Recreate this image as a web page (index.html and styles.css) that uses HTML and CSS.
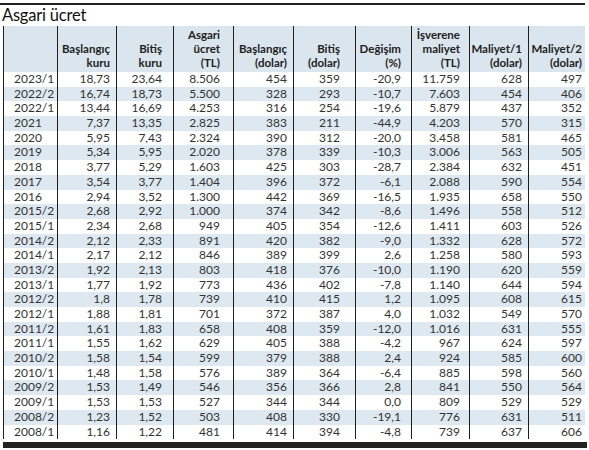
FILE: index.html
```html
<!DOCTYPE html>
<html lang="tr">
<head>
<meta charset="utf-8">
<title>Asgari ücret</title>
<link rel="stylesheet" href="styles.css">
</head>
<body>
<div class="chart">
  <div class="rule"></div>
  <h1 class="title">Asgari ücret</h1>
  <div class="table">
    <div class="row head">
      <div class="c"></div>
      <div class="c">Başlangıç<br>kuru</div>
      <div class="c">Bitiş<br>kuru</div>
      <div class="c">Asgari<br>ücret<br>(TL)</div>
      <div class="c">Başlangıç<br>(dolar)</div>
      <div class="c">Bitiş<br>(dolar)</div>
      <div class="c">Değişim<br>(%)</div>
      <div class="c">İşverene<br>maliyet<br>(TL)</div>
      <div class="c">Maliyet/1<br>(dolar)</div>
      <div class="c">Maliyet/2<br>(dolar)</div>
    </div>
    <div class="row"><div class="c">2023/1</div><div class="c">18,73</div><div class="c">23,64</div><div class="c">8.506</div><div class="c">454</div><div class="c">359</div><div class="c">-20,9</div><div class="c">11.759</div><div class="c">628</div><div class="c">497</div></div>
    <div class="row"><div class="c">2022/2</div><div class="c">16,74</div><div class="c">18,73</div><div class="c">5.500</div><div class="c">328</div><div class="c">293</div><div class="c">-10,7</div><div class="c">7.603</div><div class="c">454</div><div class="c">406</div></div>
    <div class="row"><div class="c">2022/1</div><div class="c">13,44</div><div class="c">16,69</div><div class="c">4.253</div><div class="c">316</div><div class="c">254</div><div class="c">-19,6</div><div class="c">5.879</div><div class="c">437</div><div class="c">352</div></div>
    <div class="row"><div class="c">2021</div><div class="c">7,37</div><div class="c">13,35</div><div class="c">2.825</div><div class="c">383</div><div class="c">211</div><div class="c">-44,9</div><div class="c">4.203</div><div class="c">570</div><div class="c">315</div></div>
    <div class="row"><div class="c">2020</div><div class="c">5,95</div><div class="c">7,43</div><div class="c">2.324</div><div class="c">390</div><div class="c">312</div><div class="c">-20,0</div><div class="c">3.458</div><div class="c">581</div><div class="c">465</div></div>
    <div class="row"><div class="c">2019</div><div class="c">5,34</div><div class="c">5,95</div><div class="c">2.020</div><div class="c">378</div><div class="c">339</div><div class="c">-10,3</div><div class="c">3.006</div><div class="c">563</div><div class="c">505</div></div>
    <div class="row"><div class="c">2018</div><div class="c">3,77</div><div class="c">5,29</div><div class="c">1.603</div><div class="c">425</div><div class="c">303</div><div class="c">-28,7</div><div class="c">2.384</div><div class="c">632</div><div class="c">451</div></div>
    <div class="row"><div class="c">2017</div><div class="c">3,54</div><div class="c">3,77</div><div class="c">1.404</div><div class="c">396</div><div class="c">372</div><div class="c">-6,1</div><div class="c">2.088</div><div class="c">590</div><div class="c">554</div></div>
    <div class="row"><div class="c">2016</div><div class="c">2,94</div><div class="c">3,52</div><div class="c">1.300</div><div class="c">442</div><div class="c">369</div><div class="c">-16,5</div><div class="c">1.935</div><div class="c">658</div><div class="c">550</div></div>
    <div class="row"><div class="c">2015/2</div><div class="c">2,68</div><div class="c">2,92</div><div class="c">1.000</div><div class="c">374</div><div class="c">342</div><div class="c">-8,6</div><div class="c">1.496</div><div class="c">558</div><div class="c">512</div></div>
    <div class="row"><div class="c">2015/1</div><div class="c">2,34</div><div class="c">2,68</div><div class="c">949</div><div class="c">405</div><div class="c">354</div><div class="c">-12,6</div><div class="c">1.411</div><div class="c">603</div><div class="c">526</div></div>
    <div class="row"><div class="c">2014/2</div><div class="c">2,12</div><div class="c">2,33</div><div class="c">891</div><div class="c">420</div><div class="c">382</div><div class="c">-9,0</div><div class="c">1.332</div><div class="c">628</div><div class="c">572</div></div>
    <div class="row"><div class="c">2014/1</div><div class="c">2,17</div><div class="c">2,12</div><div class="c">846</div><div class="c">389</div><div class="c">399</div><div class="c">2,6</div><div class="c">1.258</div><div class="c">580</div><div class="c">593</div></div>
    <div class="row"><div class="c">2013/2</div><div class="c">1,92</div><div class="c">2,13</div><div class="c">803</div><div class="c">418</div><div class="c">376</div><div class="c">-10,0</div><div class="c">1.190</div><div class="c">620</div><div class="c">559</div></div>
    <div class="row"><div class="c">2013/1</div><div class="c">1,77</div><div class="c">1,92</div><div class="c">773</div><div class="c">436</div><div class="c">402</div><div class="c">-7,8</div><div class="c">1.140</div><div class="c">644</div><div class="c">594</div></div>
    <div class="row"><div class="c">2012/2</div><div class="c">1,8</div><div class="c">1,78</div><div class="c">739</div><div class="c">410</div><div class="c">415</div><div class="c">1,2</div><div class="c">1.095</div><div class="c">608</div><div class="c">615</div></div>
    <div class="row"><div class="c">2012/1</div><div class="c">1,88</div><div class="c">1,81</div><div class="c">701</div><div class="c">372</div><div class="c">387</div><div class="c">4,0</div><div class="c">1.032</div><div class="c">549</div><div class="c">570</div></div>
    <div class="row"><div class="c">2011/2</div><div class="c">1,61</div><div class="c">1,83</div><div class="c">658</div><div class="c">408</div><div class="c">359</div><div class="c">-12,0</div><div class="c">1.016</div><div class="c">631</div><div class="c">555</div></div>
    <div class="row"><div class="c">2011/1</div><div class="c">1,55</div><div class="c">1,62</div><div class="c">629</div><div class="c">405</div><div class="c">388</div><div class="c">-4,2</div><div class="c">967</div><div class="c">624</div><div class="c">597</div></div>
    <div class="row"><div class="c">2010/2</div><div class="c">1,58</div><div class="c">1,54</div><div class="c">599</div><div class="c">379</div><div class="c">388</div><div class="c">2,4</div><div class="c">924</div><div class="c">585</div><div class="c">600</div></div>
    <div class="row"><div class="c">2010/1</div><div class="c">1,48</div><div class="c">1,58</div><div class="c">576</div><div class="c">389</div><div class="c">364</div><div class="c">-6,4</div><div class="c">885</div><div class="c">598</div><div class="c">560</div></div>
    <div class="row"><div class="c">2009/2</div><div class="c">1,53</div><div class="c">1,49</div><div class="c">546</div><div class="c">356</div><div class="c">366</div><div class="c">2,8</div><div class="c">841</div><div class="c">550</div><div class="c">564</div></div>
    <div class="row"><div class="c">2009/1</div><div class="c">1,53</div><div class="c">1,53</div><div class="c">527</div><div class="c">344</div><div class="c">344</div><div class="c">0,0</div><div class="c">809</div><div class="c">529</div><div class="c">529</div></div>
    <div class="row"><div class="c">2008/2</div><div class="c">1,23</div><div class="c">1,52</div><div class="c">503</div><div class="c">408</div><div class="c">330</div><div class="c">-19,1</div><div class="c">776</div><div class="c">631</div><div class="c">511</div></div>
    <div class="row"><div class="c">2008/1</div><div class="c">1,16</div><div class="c">1,22</div><div class="c">481</div><div class="c">414</div><div class="c">394</div><div class="c">-4,8</div><div class="c">739</div><div class="c">637</div><div class="c">606</div></div>
  </div>
  <div class="bar"></div>
</div>
</body>
</html>
```

FILE: styles.css
```css
* { box-sizing: border-box; }
html, body { margin: 0; padding: 0; background: #fff; }
body { font-family: Lato, "Open Sans", sans-serif; color: #333; }

.chart { width: 589px; padding-top: 3px; }

.rule { height: 2px; width: 585px; background: #222; }

.title {
  margin: 0;
  padding: 0 0 0 2px;
  height: 21px;
  font-size: 16.5px;
  line-height: 21px;
  font-weight: 400;
  letter-spacing: -0.2px;
  color: #111;
}

.table { margin-left: 3px; width: 582px; }

.row {
  display: grid;
  grid-template-columns: 54px 59px 57px 60px 60px 62px 56px 58px 59px 57px;
  height: 14.7px;
}
.row:nth-child(odd) { background: #dde8f0; }
.row.head { background: #dae5ee; height: 46px; }

.c {
  border-left: 1px solid #1e1e1e;
  text-align: right;
  font-size: 12px;
  line-height: 14.7px;
  white-space: nowrap;
  color: #333;
}
.c:first-child { text-align: left; padding-left: 10px; }
.c:nth-child(2) { padding-right: 6px; }
.c:nth-child(3) { padding-right: 11px; }
.c:nth-child(4) { padding-right: 13px; }
.c:nth-child(5) { padding-right: 6px; }
.c:nth-child(6) { padding-right: 15px; }
.c:nth-child(7) { padding-right: 10px; }
.c:nth-child(8) { padding-right: 9px; }
.c:nth-child(9) { padding-right: 6px; }
.c:nth-child(10) { padding-right: 3px; }

.head .c {
  display: flex;
  flex-direction: column;
  justify-content: flex-end;
  align-items: flex-end;
  font-size: 11.5px;
  line-height: 14px;
  font-weight: 700;
  color: #222;
  padding-bottom: 2px;
}

.bar { margin: 3px 0 0 3px; width: 584px; height: 6px; background: #222; }
```
